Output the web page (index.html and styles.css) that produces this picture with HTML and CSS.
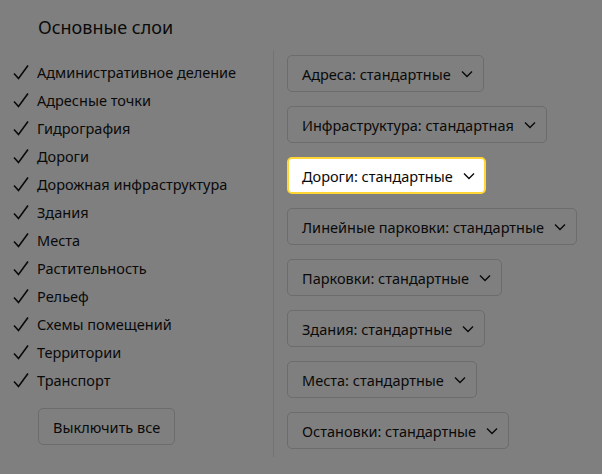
FILE: index.html
```html
<!DOCTYPE html>
<html lang="ru">
<head>
    <meta charset="UTF-8">
    <meta name="viewport" content="width=device-width, initial-scale=1.0">
    <title>Слои</title>
    <link rel="stylesheet" href="styles.css">
</head>
<body>
    <div class="layers">
        <h2 class="layers-title">Основные слои</h2>
        <div class="layers-body">
            <div class="layers-list">
                <ul>
                    <li><svg class="check" viewBox="0 0 16 16"><path d="M1 9.5l4.5 5L15 1.5"/></svg>Административное деление</li>
                    <li><svg class="check" viewBox="0 0 16 16"><path d="M1 9.5l4.5 5L15 1.5"/></svg>Адресные точки</li>
                    <li><svg class="check" viewBox="0 0 16 16"><path d="M1 9.5l4.5 5L15 1.5"/></svg>Гидрография</li>
                    <li><svg class="check" viewBox="0 0 16 16"><path d="M1 9.5l4.5 5L15 1.5"/></svg>Дороги</li>
                    <li><svg class="check" viewBox="0 0 16 16"><path d="M1 9.5l4.5 5L15 1.5"/></svg>Дорожная инфраструктура</li>
                    <li><svg class="check" viewBox="0 0 16 16"><path d="M1 9.5l4.5 5L15 1.5"/></svg>Здания</li>
                    <li><svg class="check" viewBox="0 0 16 16"><path d="M1 9.5l4.5 5L15 1.5"/></svg>Места</li>
                    <li><svg class="check" viewBox="0 0 16 16"><path d="M1 9.5l4.5 5L15 1.5"/></svg>Растительность</li>
                    <li><svg class="check" viewBox="0 0 16 16"><path d="M1 9.5l4.5 5L15 1.5"/></svg>Рельеф</li>
                    <li><svg class="check" viewBox="0 0 16 16"><path d="M1 9.5l4.5 5L15 1.5"/></svg>Схемы помещений</li>
                    <li><svg class="check" viewBox="0 0 16 16"><path d="M1 9.5l4.5 5L15 1.5"/></svg>Территории</li>
                    <li><svg class="check" viewBox="0 0 16 16"><path d="M1 9.5l4.5 5L15 1.5"/></svg>Транспорт</li>
                </ul>
                <button class="btn btn-off">Выключить все</button>
            </div>
            <div class="layers-options">
                <button class="btn select">Адреса: стандартные<svg class="arrow" viewBox="0 0 12 8"><path d="M1 1.5l5 5 5-5"/></svg></button>
                <button class="btn select">Инфраструктура: стандартная<svg class="arrow" viewBox="0 0 12 8"><path d="M1 1.5l5 5 5-5"/></svg></button>
                <button class="btn select active">Дороги: стандартные<svg class="arrow" viewBox="0 0 12 8"><path d="M1 1.5l5 5 5-5"/></svg></button>
                <button class="btn select">Линейные парковки: стандартные<svg class="arrow" viewBox="0 0 12 8"><path d="M1 1.5l5 5 5-5"/></svg></button>
                <button class="btn select">Парковки: стандартные<svg class="arrow" viewBox="0 0 12 8"><path d="M1 1.5l5 5 5-5"/></svg></button>
                <button class="btn select">Здания: стандартные<svg class="arrow" viewBox="0 0 12 8"><path d="M1 1.5l5 5 5-5"/></svg></button>
                <button class="btn select">Места: стандартные<svg class="arrow" viewBox="0 0 12 8"><path d="M1 1.5l5 5 5-5"/></svg></button>
                <button class="btn select">Остановки: стандартные<svg class="arrow" viewBox="0 0 12 8"><path d="M1 1.5l5 5 5-5"/></svg></button>
            </div>
        </div>
    </div>
</body>
</html>
```

FILE: styles.css
```css
body {
    margin: 0;
    padding: 0;
    background-color: #7f7f7f;
    font-family: 'Noto Sans', sans-serif;
    color: #0a0a0a;
}
.layers {
    height: 474px;
    box-sizing: border-box;
    padding: 14px 0 0 13px;
}
.layers-title {
    margin: 0 0 0 25px;
    font-size: 18px;
    font-weight: normal;
    line-height: 26px;
}
.layers-body {
    display: flex;
    margin-top: 10px;
}
.layers-list {
    width: 260px;
    padding-top: 8px;
}
.layers-list ul {
    list-style: none;
    margin: 0;
    padding: 0;
}
.layers-list li {
    display: flex;
    align-items: center;
    height: 28px;
    font-size: 14.5px;
}
.check {
    width: 16px;
    height: 16px;
    margin-right: 8px;
    fill: none;
    stroke: #0a0a0a;
    stroke-width: 1.6;
}
.btn {
    font-family: 'Noto Sans', sans-serif;
    font-size: 14.5px;
    color: #0a0a0a;
    background-color: transparent;
    border: 1px solid #6c6c6c;
    border-radius: 5px;
    height: 37px;
    padding: 0 14px;
    white-space: nowrap;
    cursor: pointer;
}
.btn-off {
    margin: 14px 0 0 25px;
}
.layers-options {
    border-left: 1px solid #737373;
    padding: 5px 0 8px 13px;
    display: flex;
    flex-direction: column;
    align-items: flex-start;
    gap: 14px;
}
.select {
    display: flex;
    align-items: center;
    padding-right: 10px;
}
.arrow {
    width: 12px;
    height: 8px;
    margin-left: 10px;
    fill: none;
    stroke: #0a0a0a;
    stroke-width: 1.4;
}
.select.active {
    background-color: #ffffff;
    border: 2px solid #ffd633;
    padding: 0 9px 0 13px;
}
```
